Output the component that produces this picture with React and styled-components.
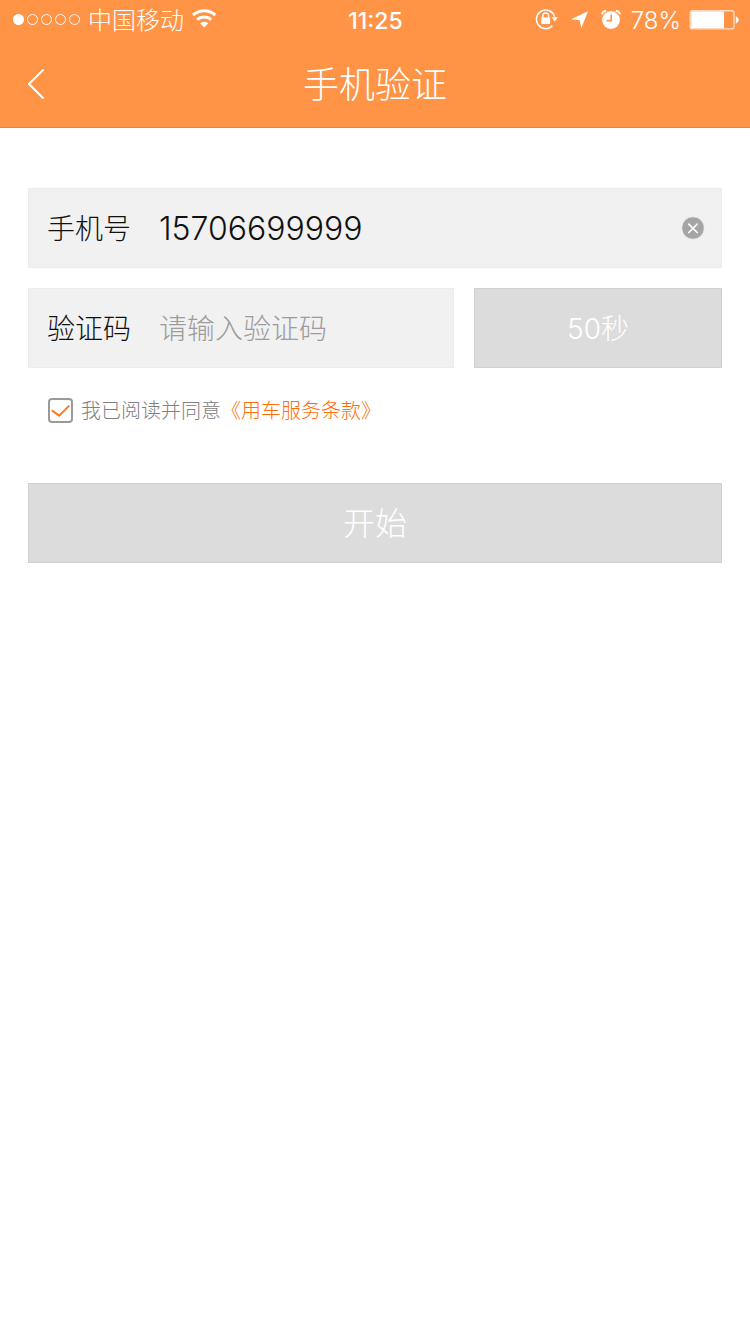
import React, { useState } from "react";
import styled, { createGlobalStyle, ThemeProvider } from "styled-components";

const theme = {
  primary: "#ff9447",
  primaryDark: "#fa8029",
  link: "#ff6d0a",
  field: "#f1f1f1",
  fieldBorder: "#ececec",
  disabled: "#dcdcdc",
  disabledBorder: "#d0d0d0",
  text: "#111",
  muted: "#808080",
  placeholder: "#9c9c9c",
};

const GlobalStyle = createGlobalStyle`
* {
  box-sizing: border-box;
}

body {
  margin: 0;
  background: #fff;
}

body, button, input {
  font-family: Inter, "Noto Sans CJK SC", sans-serif;
  font-weight: 300;
}
`

const Header = styled.header`
background: ${props => props.theme.primary};
border-bottom: 1px solid ${props => props.theme.primaryDark};
color: #fff;
`

const StatusBar = styled.div`
display: grid;
grid-template-columns: 1fr auto 1fr;
align-items: center;
height: 40px;
padding: 0 11px 0 12px;
`

const StatusGroup = styled.div`
display: flex;
align-items: center;
justify-content: ${props => props.$end ? "flex-end" : "flex-start"};
gap: 8px;
`

const StatusIcons = styled.div`
display: flex;
align-items: center;
gap: 12px;
margin-right: 2px;
`

const StatusText = styled.span`
padding-top: 2px;
font-size: 24px;
line-height: 32px;
`

const Clock = styled.time`
padding-top: 2px;
font-size: 23px;
line-height: 32px;
font-weight: 500;
`

const NavBar = styled.div`
display: grid;
grid-template-columns: 1fr auto 1fr;
align-items: center;
height: 87px;
padding: 0 20px;
`

const BackButton = styled.button`
display: flex;
justify-self: start;
padding: 8px;
border: none;
background: none;
color: inherit;
cursor: pointer;
`

const Title = styled.h1`
margin: 0;
padding-top: 2px;
font-size: 36px;
line-height: 48px;
font-weight: 300;
`

const Form = styled.form`
display: flex;
flex-direction: column;
gap: 20px;
padding: 60px 28px;
`

const Row = styled.div`
display: flex;
gap: 20px;
`

const Field = styled.div`
display: flex;
flex: 1;
align-items: center;
min-width: 0;
height: 80px;
padding: 0 16px 0 18px;
background: ${props => props.theme.field};
border: 1px solid ${props => props.theme.fieldBorder};
color: ${props => props.theme.text};
font-size: 28px;
line-height: 48px;
`

const Label = styled.label`
flex: none;
width: 112px;
padding-top: 2px;
`

const Input = styled.input`
flex: 1;
min-width: 0;
height: 50px;
padding: ${props => props.type === "tel" ? "0" : "2px 0 0"};
border: none;
outline: none;
background: none;
color: inherit;
font-size: ${props => props.type === "tel" ? "32px" : "28px"};
line-height: 48px;

&::placeholder {
  color: ${props => props.theme.placeholder};
  opacity: 1;
}
`

const ClearButton = styled.button`
display: flex;
padding: 0;
border: none;
background: none;
cursor: pointer;
`

const Button = styled.button`
width: ${props => props.$width || "100%"};
height: 80px;
padding: 2px 0 0;
background: ${props => props.theme.disabled};
border: 1px solid ${props => props.theme.disabledBorder};
color: #fff;
font-size: ${props => props.$width ? "28px" : "32px"};
line-height: 48px;
`

const Agreement = styled.div`
display: flex;
align-items: center;
height: 25px;
margin: 10px 20px 40px;
color: ${props => props.theme.muted};
font-size: 20px;
line-height: 24px;
`

const CheckLabel = styled.label`
display: flex;
align-items: center;
gap: 8px;
cursor: pointer;
`

const CheckBox = styled.span`
display: grid;
width: 25px;
height: 25px;

> * {
  grid-area: 1 / 1;
}
`

const CheckInput = styled.input`
appearance: none;
margin: 0;
border: 2px solid #9a9a9a;
border-radius: 4px;
background: #fff;
`

const CheckMark = styled.svg`
z-index: 1;
pointer-events: none;
color: #ff7a1c;
`

/* half-width brackets, with a gap before the opening one */
const TermsLink = styled.a`
margin-left: 10px;
color: ${props => props.theme.link};
font-feature-settings: "halt";
text-decoration: none;
`

const SignalIcon = () => (
  <svg width="68" height="14" viewBox="0 0 68 14" fill="none" stroke="#fff" aria-hidden="true">
    <circle cx="6.5" cy="6.5" r="5.5" fill="#fff" stroke="none" />
    {[20.5, 34.5, 48.5, 62.5].map((cx) => (
      <circle key={cx} cx={cx} cy="6.5" r="5" strokeWidth="0.9" />
    ))}
  </svg>
)

const WifiIcon = () => (
  <svg width="26" height="22" viewBox="0 0 26 22" fill="none" stroke="#fff" strokeWidth="3" aria-hidden="true">
    <path d="M1.1 6.2a16 16 0 0 1 22.2 0" />
    <path d="M5.2 10.8a10 10 0 0 1 14 0" />
    <path d="M12.2 18.5l-4.1-4.2a6 6 0 0 1 8.2 0z" fill="#fff" stroke="none" />
  </svg>
)

const RotationLockIcon = () => (
  <svg width="24" height="22" viewBox="0 0 24 22" fill="none" stroke="#fff" aria-hidden="true">
    <path d="M19.6 7.6A9.3 9.3 0 1 0 17.3 16.9" strokeWidth="1.5" />
    <path d="M16.8 8.2h6l-3 4.2z" fill="#fff" stroke="none" />
    <path d="M7.8 9V6.9a2.9 2.9 0 0 1 5.8 0V9" strokeWidth="1.4" />
    <rect x="6.3" y="8.6" width="8.8" height="6.4" rx="0.6" fill="#fff" stroke="none" />
  </svg>
)

const LocationIcon = () => (
  <svg width="18" height="18" viewBox="0 0 18 18" fill="#fff" aria-hidden="true">
    <path d="M17 0.3L10.3 17.2L8.7 9.2L0 8.2z" />
  </svg>
)

const AlarmIcon = () => (
  <svg width="20" height="20" viewBox="0 0 20 20" aria-hidden="true">
    <circle cx="10" cy="10" r="8.9" fill="#fff" />
    <path d="M0.9 4.4A4.6 4.6 0 0 1 5.2 0.8M14.8 0.8a4.6 4.6 0 0 1 4.3 3.6" fill="none" stroke="#fff" strokeWidth="2" />
    <path d="M10.2 4.4v6.2H5.6" fill="none" stroke="#ff9447" strokeWidth="1.6" />
  </svg>
)

const BatteryIcon = () => (
  <svg width="50" height="20" viewBox="0 0 50 20" aria-hidden="true">
    <rect x="1.2" y="0.7" width="43.8" height="18.2" rx="2.5" fill="none" stroke="#fff" strokeOpacity="0.65" strokeWidth="1.4" />
    <rect x="2.2" y="1.4" width="32.8" height="16.8" rx="0.5" fill="#fff" />
    <path d="M46.8 6.2c1.8 0.7 2.9 2 2.9 3.6s-1.1 2.9-2.9 3.6z" fill="#fff" />
  </svg>
)

const App = () => {
  const [phone, setPhone] = useState("15706699999");
  const [code, setCode] = useState("");
  const [agreed, setAgreed] = useState(true);

  return (
    <ThemeProvider theme={theme}>
      <GlobalStyle />
      <Header>
        <StatusBar>
          <StatusGroup>
            <SignalIcon />
            <StatusText>中国移动</StatusText>
            <WifiIcon />
          </StatusGroup>
          <Clock>11:25</Clock>
          <StatusGroup $end>
            <StatusIcons>
              <RotationLockIcon />
              <LocationIcon />
              <AlarmIcon />
            </StatusIcons>
            <StatusText>78%</StatusText>
            <BatteryIcon />
          </StatusGroup>
        </StatusBar>
        <NavBar>
          <BackButton type="button" aria-label="返回">
            <svg width="18" height="32" viewBox="0 0 18 32" fill="none" stroke="currentColor" strokeWidth="2">
              <path d="M15.5 1.5L1 16l14.5 14.5" />
            </svg>
          </BackButton>
          <Title>手机验证</Title>
        </NavBar>
      </Header>
      <Form onSubmit={(e) => e.preventDefault()}>
        <Row>
          <Field>
            <Label htmlFor="phone">手机号</Label>
            <Input id="phone" type="tel" value={phone} onChange={(e) => setPhone(e.target.value)} />
            <ClearButton type="button" aria-label="清除" onClick={() => setPhone("")}>
              <svg width="24" height="24" viewBox="0 0 24 24">
                <circle cx="12" cy="12" r="11.2" fill="#a5a5a5" stroke="#f8f8f8" strokeWidth="0.6" />
                <path d="M7.3 7.6l9.4 9.4M16.7 7.6L7.3 17" stroke="#fff" strokeWidth="1.6" />
              </svg>
            </ClearButton>
          </Field>
        </Row>
        <Row>
          <Field>
            <Label htmlFor="code">验证码</Label>
            <Input id="code" type="text" placeholder="请输入验证码" value={code} onChange={(e) => setCode(e.target.value)} />
          </Field>
          <Button type="button" $width="248px" disabled>50秒</Button>
        </Row>
        <Agreement>
          <CheckLabel>
            <CheckBox>
              <CheckInput type="checkbox" checked={agreed} onChange={(e) => setAgreed(e.target.checked)} />
              {agreed && (
                <CheckMark width="25" height="25" viewBox="0 0 25 25" fill="none" stroke="currentColor" strokeWidth="2">
                  <path d="M3.8 12.4l7.3 5.2L21.3 7.6" />
                </CheckMark>
              )}
            </CheckBox>
            我已阅读并同意
          </CheckLabel>
          <TermsLink href="#terms">《用车服务条款》</TermsLink>
        </Agreement>
        <Button type="submit" disabled>开始</Button>
      </Form>
    </ThemeProvider>
  )
}

export default App;
